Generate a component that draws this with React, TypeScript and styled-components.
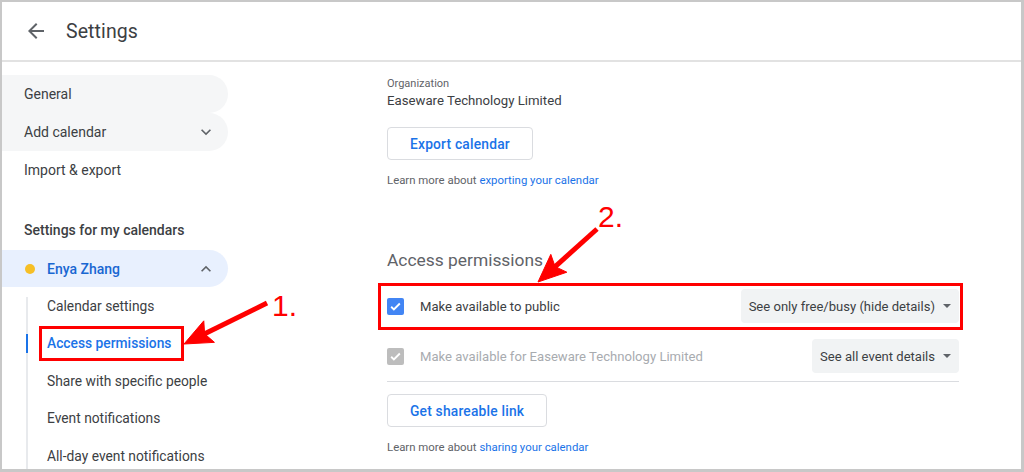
import React from "react";
import styled, { createGlobalStyle } from "styled-components";

const GlobalStyle = createGlobalStyle`
  html, body {
    margin: 0;
    padding: 0;
    background: #ffffff;
  }
  body {
    font-family: Roboto, "Liberation Sans", Arial, sans-serif;
    color: #3c4043;
  }
`;

const Frame = styled.div`
  position: relative;
  width: 1024px;
  height: 472px;
  box-sizing: border-box;
  border: 2px solid #c8c8c8;
  border-right-width: 3px;
  border-bottom-width: 3px;
  overflow: hidden;
  display: flex;
  flex-direction: column;
  background: #fff;
`;

const Header = styled.header`
  flex: none;
  height: 58px;
  border-bottom: 2px solid #e2e2e2;
  display: flex;
  align-items: center;
  gap: 18px;
  padding-left: 22px;
`;

const Title = styled.h1`
  margin: 0;
  font-size: 19.5px;
  font-weight: 400;
  color: #3c4043;
  letter-spacing: 0.1px;
`;

const Body = styled.div`
  flex: 1;
  display: flex;
  min-height: 0;
`;

const Sidebar = styled.nav`
  flex: none;
  width: 226px;
  padding-top: 13px;
  display: flex;
  flex-direction: column;
`;

const NavItem = styled.div<{ $shaded?: boolean; $selected?: boolean }>`
  height: ${(p) => (p.$selected ? 37 : 38)}px;
  flex: none;
  display: flex;
  align-items: center;
  gap: 12px;
  padding: 0 12px 0 22px;
  border-radius: 0 19px 19px 0;
  font-size: 14px;
  color: ${(p) => (p.$selected ? "#1967d2" : "#3c4043")};
  font-weight: ${(p) => (p.$selected ? 500 : 400)};
  background: ${(p) =>
    p.$selected ? "#e8f0fe" : p.$shaded ? "#f5f6f7" : "transparent"};
`;

const NavLabel = styled.span`
  flex: 1;
`;

const Dot = styled.span`
  width: 10px;
  height: 10px;
  border-radius: 50%;
  background: #f6bf26;
  margin-left: 1px;
`;

const SectionTitle = styled.div`
  margin: 29px 0 8px;
  padding-left: 22px;
  line-height: 24px;
  font-size: 14px;
  font-weight: 500;
  color: #3c4043;
`;

const SubList = styled.div`
  position: relative;
  margin-left: 24px;
  &::before {
    content: "";
    position: absolute;
    left: 0;
    top: 10px;
    bottom: 0;
    width: 2px;
    background: #e8eaed;
  }
`;

const SubItem = styled.div<{ $active?: boolean }>`
  position: relative;
  height: 37.5px;
  flex: none;
  display: flex;
  align-items: center;
  padding-left: 21px;
  font-size: 13.8px;
  color: ${(p) => (p.$active ? "#1a73e8" : "#3c4043")};
  font-weight: ${(p) => (p.$active ? 500 : 400)};
  ${(p) =>
    p.$active &&
    `
    &::before {
      content: "";
      position: absolute;
      left: 0;
      top: 9px;
      bottom: 9px;
      width: 2px;
      background: #1a73e8;
    }
  `}
`;

const Highlight = styled.span`
  position: relative;
  &::after {
    content: "";
    position: absolute;
    left: -8px;
    right: -13px;
    top: -9px;
    bottom: -10px;
    border: 3px solid #ff0000;
  }
`;

const Main = styled.main`
  flex: 1;
  padding: 14px 0 0 159px;
`;

const Column = styled.div`
  width: 572px;
  display: flex;
  flex-direction: column;
  align-items: flex-start;
`;

const Label = styled.div`
  font-size: 11px;
  line-height: 16px;
  color: #5f6368;
`;

const Value = styled.div`
  font-size: 13.2px;
  line-height: 17px;
  color: #3c4043;
`;

const OutlineButton = styled.button<{ $top: number }>`
  margin-top: ${(p) => p.$top}px;
  height: 33px;
  padding: 0 22px;
  border: 1px solid #dadce0;
  border-radius: 4px;
  background: #fff;
  font-family: inherit;
  font-size: 13.8px;
  font-weight: 500;
  letter-spacing: 0.2px;
  color: #1a73e8;
`;

const Help = styled.div`
  margin-top: 12px;
  font-size: 11.4px;
  line-height: 16px;
  color: #5f6368;
  a {
    color: #1a73e8;
    text-decoration: none;
  }
`;

const Heading = styled.h2`
  margin: 60px 0 9px;
  font-size: 17.4px;
  line-height: 24px;
  font-weight: 400;
  color: #5f6368;
`;

const PermRow = styled.div<{ $divider?: boolean }>`
  position: relative;
  align-self: stretch;
  height: 50px;
  display: flex;
  align-items: center;
  gap: 16px;
  border-bottom: ${(p) => (p.$divider ? "1px solid #dadce0" : "none")};
`;

const RowMarker = styled.div`
  position: absolute;
  left: -9px;
  right: -4px;
  top: 2px;
  bottom: 1px;
  border: 3px solid #ff0000;
  pointer-events: none;
`;

const Check = styled.span<{ $disabled?: boolean }>`
  flex: none;
  width: 17px;
  height: 17px;
  border-radius: 2px;
  background: ${(p) => (p.$disabled ? "#bdbdbd" : "#4285f4")};
  display: flex;
  align-items: center;
  justify-content: center;
`;

const RowText = styled.span<{ $disabled?: boolean }>`
  flex: 1;
  font-size: 13.1px;
  color: ${(p) => (p.$disabled ? "#a8abaf" : "#3c4043")};
`;

const Select = styled.div`
  height: 34px;
  display: flex;
  align-items: center;
  gap: 8px;
  padding: 0 8px 0 8px;
  border-radius: 4px;
  background: #f1f3f4;
  font-size: 13.05px;
  color: #3c4043;
  &::after {
    content: "";
    border-left: 4px solid transparent;
    border-right: 4px solid transparent;
    border-top: 4px solid #5f6368;
  }
`;

const Overlay = styled.svg`
  position: absolute;
  left: -2px;
  top: -2px;
  pointer-events: none;
`;

const StepNumber = styled.span<{ $x: number; $y: number }>`
  position: absolute;
  left: ${(p) => p.$x}px;
  top: ${(p) => p.$y}px;
  font-family: "Liberation Sans", Arial, sans-serif;
  font-size: 30px;
  line-height: 30px;
  color: #ff0000;
`;

const BackIcon = () => (
  <svg width="24" height="24" viewBox="0 0 24 24" fill="#5f6368">
    <path d="M20 11H7.83l5.59-5.59L12 4l-8 8 8 8 1.41-1.41L7.83 13H20v-2z" />
  </svg>
);

const Chevron = ({ up }: { up?: boolean }) => (
  <svg width="20" height="20" viewBox="0 0 24 24" fill="#5f6368">
    {up ? (
      <path d="M12 8l-6 6 1.41 1.41L12 10.83l4.59 4.58L18 14z" />
    ) : (
      <path d="M16.59 8.59L12 13.17 7.41 8.59 6 10l6 6 6-6z" />
    )}
  </svg>
);

const Tick = () => (
  <svg width="13" height="13" viewBox="0 0 24 24" fill="none" stroke="#fff" strokeWidth="3.4">
    <path d="M4 12.5l5 5L20 6.5" />
  </svg>
);

const Arrow = ({ x1, y1, x2, y2 }: { x1: number; y1: number; x2: number; y2: number }) => {
  const dx = x2 - x1;
  const dy = y2 - y1;
  const len = Math.hypot(dx, dy);
  const ux = dx / len;
  const uy = dy / len;
  const nx = -uy;
  const ny = ux;
  const head = 28;
  const half = 12;
  const bx = x2 - ux * head;
  const by = y2 - uy * head;
  const pts = [
    [x2, y2],
    [bx + nx * half, by + ny * half],
    [bx + ux * 5, by + uy * 5],
    [bx - nx * half, by - ny * half],
  ]
    .map((p) => p.join(","))
    .join(" ");
  return (
    <g fill="#ff0000" stroke="#ff0000">
      <line x1={x1} y1={y1} x2={bx + ux * 6} y2={by + uy * 6} strokeWidth="5" />
      <polygon points={pts} strokeWidth="1" />
    </g>
  );
};

const subItems = [
  "Calendar settings",
  "Access permissions",
  "Share with specific people",
  "Event notifications",
  "All-day event notifications",
];

export default function App() {
  return (
    <>
      <GlobalStyle />
      <Frame>
        <Header>
          <BackIcon />
          <Title>Settings</Title>
        </Header>
        <Body>
          <Sidebar>
            <NavItem $shaded>
              <NavLabel>General</NavLabel>
            </NavItem>
            <NavItem $shaded>
              <NavLabel>Add calendar</NavLabel>
              <Chevron />
            </NavItem>
            <NavItem>
              <NavLabel>Import &amp; export</NavLabel>
            </NavItem>
            <SectionTitle>Settings for my calendars</SectionTitle>
            <NavItem $selected>
              <Dot />
              <NavLabel>Enya Zhang</NavLabel>
              <Chevron up />
            </NavItem>
            <SubList>
              {subItems.map((item) =>
                item === "Access permissions" ? (
                  <SubItem key={item} $active>
                    <Highlight>{item}</Highlight>
                  </SubItem>
                ) : (
                  <SubItem key={item}>{item}</SubItem>
                )
              )}
            </SubList>
          </Sidebar>
          <Main>
            <Column>
              <Label>Organization</Label>
              <Value>Easeware Technology Limited</Value>
              <OutlineButton $top={18}>Export calendar</OutlineButton>
              <Help>
                Learn more about <a href="#">exporting your calendar</a>
              </Help>
              <Heading>Access permissions</Heading>
              <PermRow>
                <RowMarker />
                <Check>
                  <Tick />
                </Check>
                <RowText>Make available to public</RowText>
                <Select>See only free/busy (hide details)</Select>
              </PermRow>
              <PermRow $divider>
                <Check $disabled>
                  <Tick />
                </Check>
                <RowText $disabled>Make available for Easeware Technology Limited</RowText>
                <Select>See all event details</Select>
              </PermRow>
              <OutlineButton $top={12}>Get shareable link</OutlineButton>
              <Help>
                Learn more about <a href="#">sharing your calendar</a>
              </Help>
            </Column>
          </Main>
        </Body>
        <Overlay width="1024" height="472">
          <Arrow x1={267} y1={303} x2={184} y2={344} />
          <Arrow x1={597} y1={229} x2={538} y2={282} />
        </Overlay>
        <StepNumber $x={270} $y={289}>1.</StepNumber>
        <StepNumber $x={596} $y={200}>2.</StepNumber>
      </Frame>
    </>
  );
}
